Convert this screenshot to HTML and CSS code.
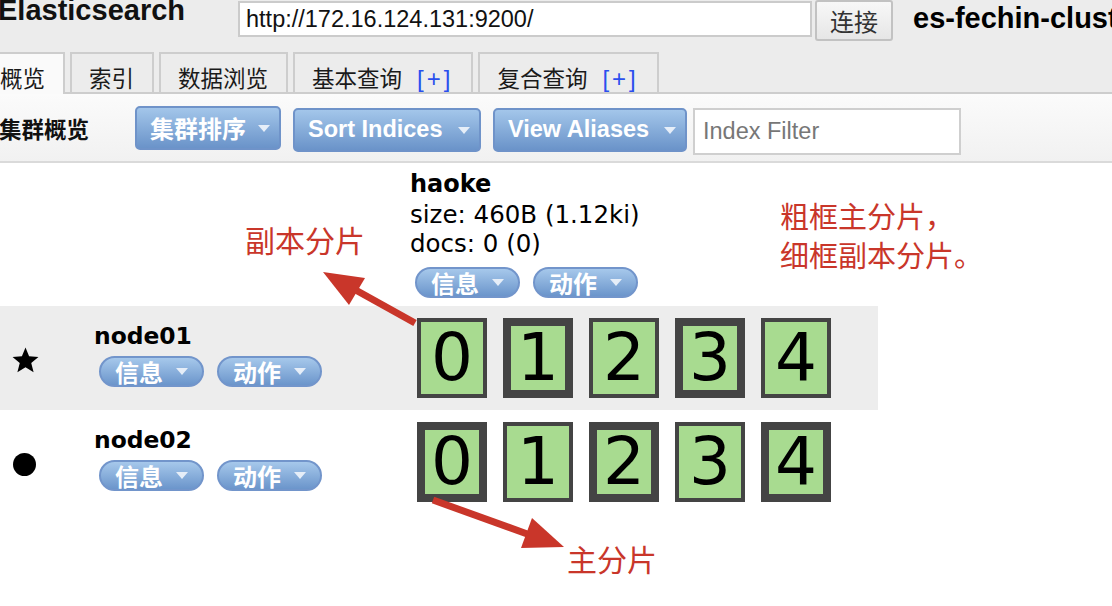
FILE: index.html
```html
<!DOCTYPE html>
<html lang="zh-CN">
<head>
<meta charset="utf-8">
<title>Elasticsearch Head</title>
<link rel="stylesheet" href="styles.css">
</head>
<body>
<div class="page">
  <header class="top">
    <h1 class="brand">Elasticsearch</h1>
    <input class="url" type="text" value="http://172.16.124.131:9200/">
    <button class="connect">连接</button>
    <span class="cluster-name">es-fechin-cluster</span>
  </header>

  <nav class="tabs">
    <div class="tab active">概览</div>
    <div class="tab">索引</div>
    <div class="tab">数据浏览</div>
    <div class="tab">基本查询<span class="plus">[+]</span></div>
    <div class="tab">复合查询<span class="plus">[+]</span></div>
  </nav>

  <div class="toolbar">
    <h2 class="toolbar-title">集群概览</h2>
    <button class="btn btn-sort-cluster">集群排序<span class="caret"></span></button>
    <button class="btn btn-en btn-sort">Sort Indices<span class="caret"></span></button>
    <button class="btn btn-en btn-alias">View Aliases<span class="caret"></span></button>
    <input class="filter" type="text" placeholder="Index Filter">
  </div>

  <section class="overview">
    <div class="row row-head">
      <div class="col-icon"></div>
      <div class="col-node"></div>
      <div class="col-index index-head">
        <div class="index-name">haoke</div>
        <div class="index-line">size: 460B (1.12ki)</div>
        <div class="index-line">docs: 0 (0)</div>
        <div class="pills">
          <span class="pill">信息<span class="caret"></span></span>
          <span class="pill">动作<span class="caret"></span></span>
        </div>
      </div>
    </div>

    <div class="row row-alt">
      <div class="col-icon">
        <svg class="star" width="27" height="27" viewBox="0 0 24 24"><polygon points="12,0.5 15.2,8.3 23.5,8.8 17.1,14.2 19.2,22.5 12,18 4.8,22.5 6.9,14.2 0.5,8.8 8.8,8.3" fill="#000"/></svg>
      </div>
      <div class="col-node">
        <div class="node-name">node01</div>
        <div class="pills">
          <span class="pill">信息<span class="caret"></span></span>
          <span class="pill">动作<span class="caret"></span></span>
        </div>
      </div>
      <div class="col-index">
        <div class="shards">
          <div class="shard">0</div>
          <div class="shard primary">1</div>
          <div class="shard">2</div>
          <div class="shard primary">3</div>
          <div class="shard">4</div>
        </div>
      </div>
    </div>

    <div class="row">
      <div class="col-icon">
        <span class="dot"></span>
      </div>
      <div class="col-node">
        <div class="node-name">node02</div>
        <div class="pills">
          <span class="pill">信息<span class="caret"></span></span>
          <span class="pill">动作<span class="caret"></span></span>
        </div>
      </div>
      <div class="col-index">
        <div class="shards">
          <div class="shard primary">0</div>
          <div class="shard">1</div>
          <div class="shard primary">2</div>
          <div class="shard">3</div>
          <div class="shard primary">4</div>
        </div>
      </div>
    </div>
  </section>

  <svg class="arrows" width="1112" height="606" viewBox="0 0 1112 606">
    <line x1="415" y1="323" x2="352" y2="288" stroke="#c9362a" stroke-width="7"/>
    <polygon points="323,272 365,278 349,305" fill="#c9362a"/>
    <line x1="433" y1="500" x2="530" y2="535" stroke="#c9362a" stroke-width="7"/>
    <polygon points="564,547 532,518 521,548" fill="#c9362a"/>
  </svg>
  <div class="note note-replica">副本分片</div>
  <div class="note note-legend">粗框主分片，<br>细框副本分片。</div>
  <div class="note note-primary">主分片</div>
</div>
</body>
</html>
```

FILE: styles.css
```css
html, body {
  margin: 0;
  padding: 0;
}

body {
  width: 1112px;
  height: 606px;
  overflow: hidden;
  background: #fff;
  font-family: "DejaVu Sans", "Noto Sans CJK SC", sans-serif;
  color: #000;
}

.page {
  position: relative;
  width: 1112px;
  height: 606px;
  overflow: hidden;
}

/* ---------- header ---------- */
.top {
  display: flex;
  align-items: flex-start;
  height: 52px;
  background: #ececec;
  white-space: nowrap;
}

.brand {
  flex: none;
  width: 240px;
  margin: -6px 0 0 -2px;
  font: bold 29px/32px "Liberation Sans", sans-serif;
  color: #111;
}

.url {
  flex: none;
  box-sizing: border-box;
  width: 574px;
  height: 36px;
  margin: 1px 0 0 0;
  padding: 0 6px;
  border: 2px solid #cbcbcb;
  background: #fff;
  font: 23.5px "Liberation Sans", sans-serif;
  color: #111;
  outline: none;
}

.connect {
  flex: none;
  box-sizing: border-box;
  width: 78px;
  height: 41px;
  margin: 0 0 0 3px;
  padding: 0;
  border: 2px solid #c2c2c2;
  border-radius: 3px;
  background: linear-gradient(#f8f8f8, #e6e6e6);
  font: 24px/1 "Noto Sans CJK SC", sans-serif;
  color: #333;
}

.cluster-name {
  flex: none;
  margin: 0 0 0 20px;
  font: bold 29px/36px "Liberation Sans", sans-serif;
  color: #000;
}

/* ---------- tabs ---------- */
.tabs {
  display: flex;
  align-items: flex-start;
  gap: 5px;
  height: 40px;
  margin-left: -19px;
  border-bottom: 2px solid #cdcdcd;
  background: #ececec;
}

.tab {
  flex: none;
  box-sizing: border-box;
  height: 40px;
  padding: 9px 18px 0 17px;
  border: 2px solid #cdcdcd;
  border-bottom: none;
  background: #ececec;
  font: 22.5px/28px "Noto Sans CJK SC", sans-serif;
  color: #1a1a1a;
  white-space: nowrap;
}

.tab.active {
  height: 42px;
  margin-bottom: -2px;
  background: #fafafa;
}

.plus {
  margin-left: 15px;
  font: 24px/28px "Liberation Sans", sans-serif;
  letter-spacing: 3px;
  color: #2a4fee;
}

/* ---------- toolbar ---------- */
.toolbar {
  display: flex;
  align-items: flex-start;
  height: 67px;
  border-bottom: 2px solid #dadada;
  background: linear-gradient(#fbfbfb, #f1f1f1);
}

.toolbar-title {
  flex: none;
  width: 136px;
  margin: 20px 0 0 -1px;
  font: bold 22.5px/28px "Noto Sans CJK SC", sans-serif;
  color: #111;
}

.btn {
  flex: none;
  display: flex;
  align-items: center;
  justify-content: space-between;
  box-sizing: border-box;
  height: 44px;
  margin: 14px 12px 0 0;
  padding: 0 9px 0 13px;
  border: 2px solid #6f93c9;
  border-radius: 5px;
  background: linear-gradient(#a3c6ea, #6a93c9);
  color: #fff;
  font: bold 24px/1 "Noto Sans CJK SC", sans-serif;
  white-space: nowrap;
}

.btn-sort-cluster {
  width: 146px;
  margin-top: 12px;
}

.btn-en {
  font: bold 23.5px/1 "Liberation Sans", sans-serif;
}

.btn-sort {
  width: 188px;
}

.btn-alias {
  width: 194px;
  margin-right: 6px;
}

.caret {
  display: inline-block;
  width: 0;
  height: 0;
  border-left: 6px solid transparent;
  border-right: 6px solid transparent;
  border-top: 7px solid #e6eef8;
}

.filter {
  flex: none;
  box-sizing: border-box;
  width: 268px;
  height: 47px;
  margin-top: 14px;
  padding: 0 8px;
  border: 2px solid #cfcfcf;
  background: #fff;
  font: 23.5px "Liberation Sans", sans-serif;
  color: #333;
  outline: none;
}

.filter::placeholder {
  color: #777;
}

/* ---------- overview table ---------- */
.overview {
  display: flex;
  flex-direction: column;
}

.row {
  display: flex;
  width: 878px;
  height: 104px;
}

.row-head {
  height: 143px;
}

.row-alt {
  background: #ededed;
}

.col-icon {
  flex: none;
  box-sizing: border-box;
  width: 94px;
  padding: 4px 0 0 12px;
  display: flex;
  align-items: center;
}

.star {
  display: block;
}

.dot {
  display: block;
  width: 23px;
  height: 23px;
  margin-left: 1px;
  border-radius: 50%;
  background: #000;
}

.col-node {
  flex: none;
  box-sizing: border-box;
  width: 316px;
  padding-top: 17px;
}

.node-name {
  font: bold 23.4px/27px "DejaVu Sans", sans-serif;
}

.col-index {
  flex: 1;
}

.index-head {
  padding-top: 7px;
}

.index-name {
  font: bold 24px/29.5px "DejaVu Sans", sans-serif;
}

.index-line {
  font: 24.5px/29.5px "DejaVu Sans", sans-serif;
}

.pills {
  display: flex;
  gap: 13px;
  margin: 6px 0 0 5px;
}

.index-head .pills {
  margin-top: 8px;
}

.pill {
  display: flex;
  align-items: center;
  box-sizing: border-box;
  height: 31px;
  padding: 0 14px 0 14px;
  border: 2px solid #7295cb;
  border-radius: 16px;
  background: linear-gradient(#a6c8eb, #6b95cb);
  color: #fff;
  font: bold 24px/27px "Noto Sans CJK SC", sans-serif;
  white-space: nowrap;
}

.pill .caret {
  margin-left: 13px;
}

.shards {
  display: flex;
  gap: 16px;
  padding: 12px 0 0 7px;
}

.shard {
  flex: none;
  box-sizing: border-box;
  width: 70px;
  height: 80px;
  border: 4px solid #444;
  background: #a8db90;
  display: flex;
  align-items: center;
  justify-content: center;
  font: 66px/1 "DejaVu Sans", sans-serif;
  color: #000;
}

.shard.primary {
  border-width: 8px;
}

/* ---------- annotations (overlay) ---------- */
.arrows {
  position: absolute;
  left: 0;
  top: 0;
  pointer-events: none;
}

.note {
  position: absolute;
  font-family: "Noto Sans CJK SC", sans-serif;
  color: #c9362a;
  white-space: nowrap;
}

.note-replica {
  left: 245px;
  top: 224px;
  font-size: 30px;
  line-height: 30px;
}

.note-legend {
  left: 780px;
  top: 196px;
  font-size: 29px;
  line-height: 39px;
}

.note-primary {
  left: 567px;
  top: 543px;
  font-size: 30px;
  line-height: 30px;
}
```
